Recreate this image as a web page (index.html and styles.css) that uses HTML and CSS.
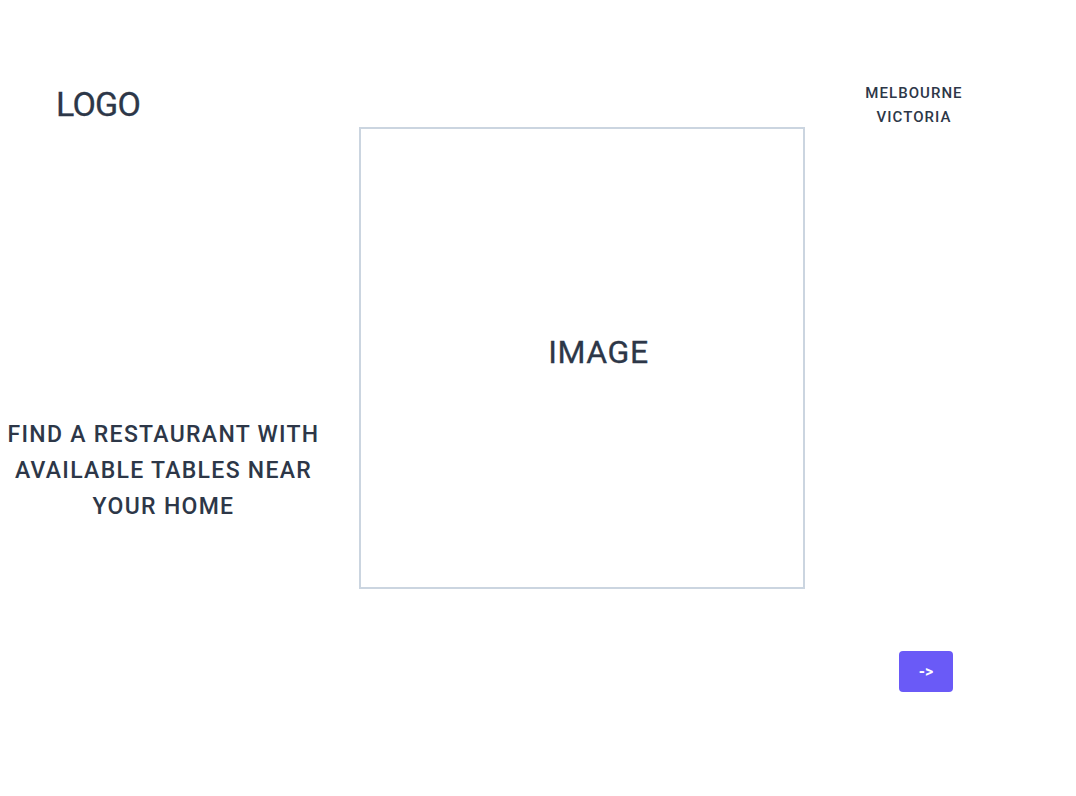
FILE: index.html
```html
<!DOCTYPE html>
<html lang="en">
<head>
<meta charset="utf-8">
<title>Find a restaurant</title>
<link rel="stylesheet" href="styles.css">
</head>
<body>
<div class="page">
  <div class="col-left">
    <div class="logo">LOGO</div>
    <p class="tagline">FIND A RESTAURANT WITH AVAILABLE TABLES NEAR YOUR HOME</p>
  </div>
  <div class="col-mid">
    <div class="image-box">IMAGE</div>
  </div>
  <div class="col-right">
    <div class="location">MELBOURNE<br>VICTORIA</div>
    <button class="next" type="button">-&gt;</button>
  </div>
</div>
</body>
</html>
```

FILE: styles.css
```css
* { box-sizing: border-box; }
html, body { margin: 0; padding: 0; background: #ffffff; }
body {
  font-family: Roboto, "Noto Sans", sans-serif;
  font-weight: 400;
  color: #2d3748;
  width: 1076px;
  height: 796px;
  overflow: hidden;
}
.page {
  display: grid;
  grid-template-columns: 359px 446px 1fr;
}
.col-left {
  padding-right: 32px;
  display: flex;
  flex-direction: column;
}
.logo {
  margin-top: 83px;
  padding-left: 56px;
  font-size: 34px;
  line-height: 42px;
  letter-spacing: -0.8px;
  -webkit-text-stroke: 0.3px #2d3748;
}
.tagline {
  margin: 292px 0 0;
  text-align: center;
  font-size: 23px;
  font-weight: 500;
  line-height: 36px;
  letter-spacing: 1.3px;
}
.col-mid { padding-top: 127px; }
.image-box {
  width: 446px;
  height: 462px;
  border: 2px solid #cbd5e0;
  padding: 0 0 13px 33px;
  display: flex;
  align-items: center;
  justify-content: center;
  font-size: 32px;
  line-height: 40px;
  letter-spacing: 0.6px;
  -webkit-text-stroke: 0.3px #2d3748;
}
.col-right {
  display: flex;
  flex-direction: column;
  align-items: flex-start;
}
.location {
  margin-top: 81px;
  margin-left: 9px;
  width: 200px;
  text-align: center;
  font-size: 15px;
  font-weight: 500;
  line-height: 24px;
  letter-spacing: 1.05px;
}
.next {
  margin-top: 522px;
  margin-left: 94px;
  width: 54px;
  height: 41px;
  border: 0;
  border-radius: 4px;
  background: #6a5af7;
  color: #ffffff;
  font-family: Roboto, "Noto Sans", sans-serif;
  font-weight: 700;
  font-size: 16px;
  padding: 0;
}
```
